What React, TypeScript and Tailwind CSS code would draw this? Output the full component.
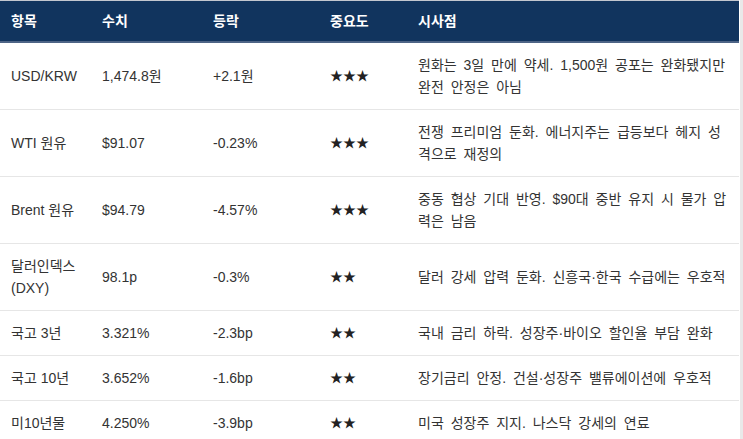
const headers = ["항목", "수치", "등락", "중요도", "시사점"];

type Row = {
  name: string[];
  value: string;
  change: string;
  stars: string;
  note: string[];
};

const rows: Row[] = [
  {
    name: ["USD/KRW"],
    value: "1,474.8원",
    change: "+2.1원",
    stars: "★★★",
    note: ["원화는 3일 만에 약세. 1,500원 공포는 완화됐지만", "완전 안정은 아님"],
  },
  {
    name: ["WTI 원유"],
    value: "$91.07",
    change: "-0.23%",
    stars: "★★★",
    note: ["전쟁 프리미엄 둔화. 에너지주는 급등보다 헤지 성", "격으로 재정의"],
  },
  {
    name: ["Brent 원유"],
    value: "$94.79",
    change: "-4.57%",
    stars: "★★★",
    note: ["중동 협상 기대 반영. $90대 중반 유지 시 물가 압", "력은 남음"],
  },
  {
    name: ["달러인덱스", "(DXY)"],
    value: "98.1p",
    change: "-0.3%",
    stars: "★★",
    note: ["달러 강세 압력 둔화. 신흥국·한국 수급에는 우호적"],
  },
  {
    name: ["국고 3년"],
    value: "3.321%",
    change: "-2.3bp",
    stars: "★★",
    note: ["국내 금리 하락. 성장주·바이오 할인율 부담 완화"],
  },
  {
    name: ["국고 10년"],
    value: "3.652%",
    change: "-1.6bp",
    stars: "★★",
    note: ["장기금리 안정. 건설·성장주 밸류에이션에 우호적"],
  },
  {
    name: ["미10년물"],
    value: "4.250%",
    change: "-3.9bp",
    stars: "★★",
    note: ["미국 성장주 지지. 나스닥 강세의 연료"],
  },
];

const cols = "grid grid-cols-[91px_111px_117px_88px_1fr]";

const Lines = ({ lines }: { lines: string[] }) => (
  <div className="whitespace-nowrap">
    {lines.map((l, i) => (
      <div key={i}>{l}</div>
    ))}
  </div>
);

export default function App() {
  return (
    <div
      className="flex w-[743px] h-[439px] overflow-hidden bg-white text-[14px] leading-[22px] text-[#333]"
      style={{ fontFamily: '"Liberation Sans", "Noto Sans CJK KR", sans-serif' }}
    >
      <div className="w-[739px] shrink-0 border-t border-[#c3c7cf]">
        {/* Header */}
        <div className={`${cols} h-[42px] items-center bg-[#11345e] border-b-2 border-[#4d6486] font-bold text-white`}>
          {headers.map((h) => (
            <div key={h} className="px-[11px]">
              {h}
            </div>
          ))}
        </div>

        {/* Body */}
        {rows.map((r, i) => (
          <div
            key={i}
            className={`${cols} items-center py-[11px] border-b border-[#e6e6e6]`}
          >
            <div className="px-[11px]">
              <Lines lines={r.name} />
            </div>
            <div className="px-[11px]">{r.value}</div>
            <div className="px-[11px]">{r.change}</div>
            <div className="px-[11px] text-[13px] text-[#222]">{r.stars}</div>
            <div className="px-[11px] [word-spacing:3px]">
              <Lines lines={r.note} />
            </div>
          </div>
        ))}
      </div>
      <div className="w-px shrink-0" />
      <div className="w-[3px] shrink-0 bg-[#e9e9e9]" />
    </div>
  );
}
